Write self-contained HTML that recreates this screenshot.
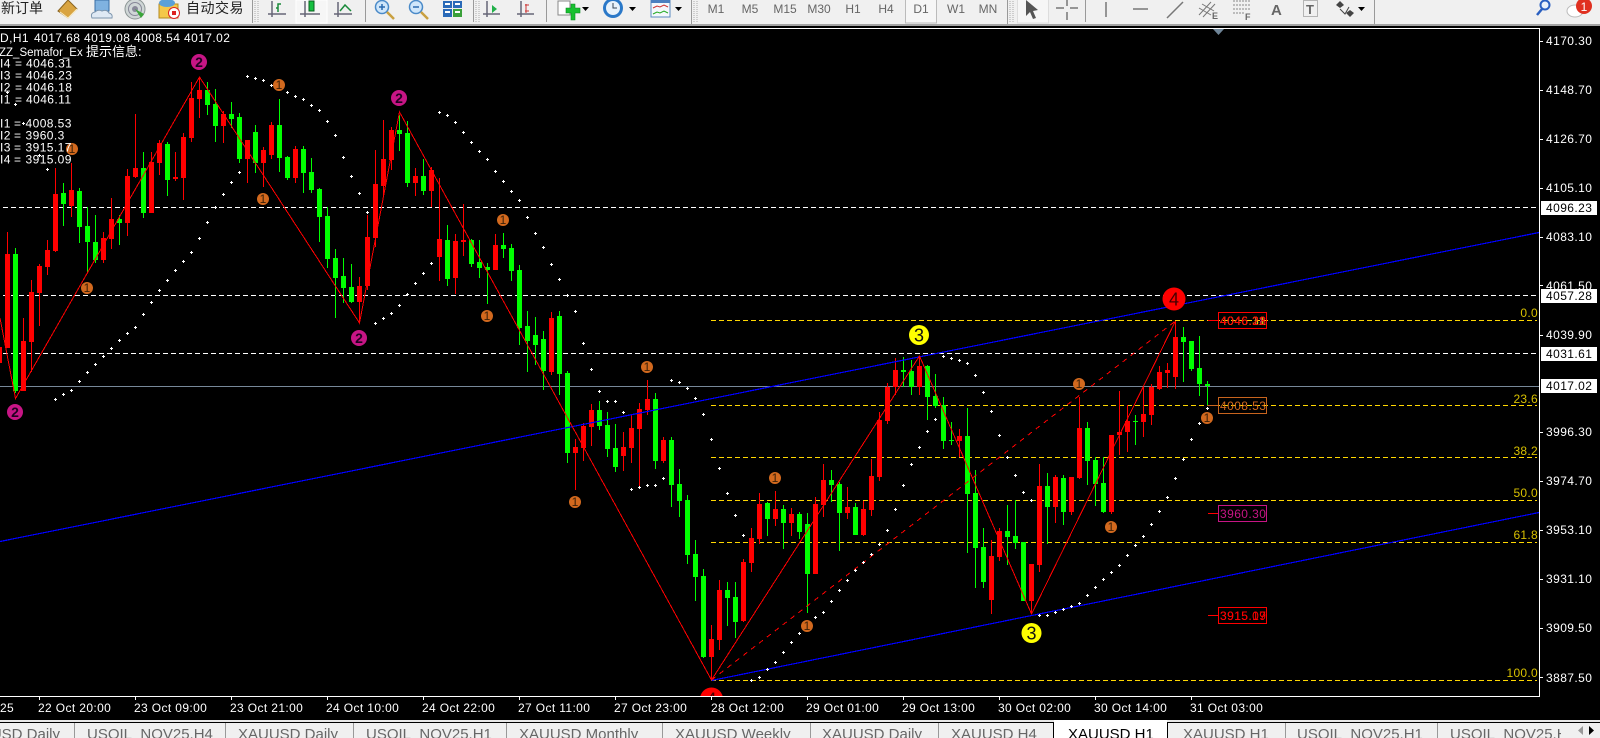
<!DOCTYPE html>
<html><head><meta charset="utf-8"><title>XAUUSD,H1</title>
<style>
html,body{margin:0;padding:0;background:#000;width:1600px;height:738px;overflow:hidden}
svg{display:block}
text{font-family:"Liberation Sans","Noto Sans CJK SC",sans-serif;white-space:pre}
.ax{font-size:12px;letter-spacing:.42px;fill:#fff}
.tm{font-size:12px;letter-spacing:.37px;fill:#fff}
.tf{font-size:12px;fill:#666;text-anchor:middle}
.tab{font-size:15px;fill:#666}
.inf{font-size:12px;fill:#fff;letter-spacing:.42px}
.fib{font-size:12px;fill:#d8c000;text-anchor:end;letter-spacing:.3px}
.lb{font-size:12px;letter-spacing:.42px}
.s1{font-size:12px;fill:#3a2008;text-anchor:middle}
.s2{font-size:14px;fill:#200020;text-anchor:middle;font-weight:bold}
.s3{font-size:18px;fill:#111;text-anchor:middle}
</style></head><body>
<svg width="1600" height="738" viewBox="0 0 1600 738" xmlns="http://www.w3.org/2000/svg">
<defs>
<clipPath id="c"><rect x="0" y="29" width="1539" height="667"/></clipPath>
<marker id="d" viewBox="0 0 3 3" refX="1" refY="1" markerWidth="3" markerHeight="3" markerUnits="userSpaceOnUse"><path d="M1 0h1v3H1zM0 1h3v1H0z" fill="#fff"/></marker>
</defs>
<rect width="1600" height="738" fill="#000"/>

<!-- toolbar -->
<rect width="1600" height="24" fill="#f0f0f0"/>
<rect y="24" width="1600" height="2" fill="#a4a4a4"/>
<text x="1" y="13" font-size="14" fill="#222">新订单</text>
<text x="186" y="13" font-size="14" fill="#222" letter-spacing=".5">自动交易</text>
<!-- book -->
<path d="M58 11 68 0l9 9-9 9z" fill="#d9a441" stroke="#8a6420"/><path d="M60 12l8 6 9-9" fill="none" stroke="#fff2c8"/>
<!-- monitor cloud -->
<path d="M95 0h14v11H95z" fill="#7fb2e0" stroke="#3a6ea5"/><path d="M92 18q-2-5 3-6 3-3 7-1 5-2 7 2 4 1 3 5z" fill="#dfe9f4" stroke="#7d95ad"/>
<!-- radar -->
<circle cx="135" cy="9" r="10" fill="#cfd6d6" stroke="#8b9494"/><circle cx="135" cy="9" r="6.5" fill="none" stroke="#889"/><circle cx="135" cy="9" r="3" fill="#889"/><path d="M135 9l6 9 3-4z" fill="#3aa53a"/>
<!-- auto -->
<path d="M159 4h19v14h-19z" fill="#f4c84a" stroke="#b58a20"/><ellipse cx="167" cy="3" rx="8" ry="4" fill="#5aa0d8"/><circle cx="174" cy="13" r="5.5" fill="#fff" stroke="#d22"/><rect x="172" y="11" width="4" height="4" fill="#d22"/>
<path d="M252.5 0V23M691.5 0V24M1007.5 0V24M365.5 0V22M473.5 0V22M546.5 0V22M1085.5 0V22M1374.5 0V24" stroke="#999"/>
<path d="M255 1v22M258 1v22M476 1v22M479 1v22M694 1v22M697 1v22M1010 1v22M1013 1v22" stroke="#aaa" stroke-dasharray="1 1"/>
<!-- pressed -->
<rect x="296" y="0" width="31" height="23" fill="#f6f6f6" stroke="#fff"/>
<rect x="905.5" y="-1" width="31" height="24" fill="#f6f6f6" stroke="#bbb"/>
<rect x="1017.5" y="-1" width="31" height="24" fill="#f6f6f6" stroke="#ddd"/>
<!-- chart type -->
<g fill="none" stroke="#667" stroke-width="1.5"><path d="M272 1v16M268 14h18M283 17v0"/><path d="M305 1v16M300 14h20"/><path d="M338 2v15M334 14h18"/></g>
<path d="M278 12V4h3M278 8h-2" fill="none" stroke="#1a8a3a" stroke-width="1.5"/>
<rect x="309" y="1" width="5" height="10" fill="#16c040" stroke="#0a6020"/>
<path d="M340 11l5-6 6 6" fill="none" stroke="#1a8a3a" stroke-width="1.5"/>
<!-- zoom -->
<circle cx="382" cy="7" r="6.5" fill="#cfe6fa" stroke="#4a8ac8" stroke-width="1.5"/><path d="M379 7h6M382 4v6" stroke="#2a6ab0" stroke-width="1.5"/><path d="M387 12l7 7" stroke="#c9a040" stroke-width="2.5"/>
<circle cx="416" cy="7" r="6.5" fill="#cfe6fa" stroke="#4a8ac8" stroke-width="1.5"/><path d="M413 7h6" stroke="#2a6ab0" stroke-width="1.5"/><path d="M421 12l7 7" stroke="#c9a040" stroke-width="2.5"/>
<g><rect x="443" y="1" width="9" height="7" fill="#2a6ab8"/><rect x="453" y="1" width="9" height="7" fill="#2a6ab8"/><rect x="443" y="9" width="9" height="8" fill="#2a6ab8"/><rect x="453" y="9" width="9" height="8" fill="#3aa03a"/><rect x="445" y="3" width="5" height="2" fill="#fff"/><rect x="455" y="3" width="5" height="2" fill="#fff"/><rect x="445" y="11" width="5" height="2" fill="#fff"/><rect x="455" y="11" width="5" height="2" fill="#fff"/></g>
<path d="M487 1v16M483 14h17M521 1v16M517 14h17" fill="none" stroke="#667" stroke-width="1.5"/>
<path d="M492 5l5 4-5 4z" fill="#22b04a"/><path d="M526 4v9M525 5h4M525 11h4" stroke="#c33" fill="none"/>
<!-- new chart -->
<path d="M558 1h12v14h-12z" fill="#fff" stroke="#888"/><path d="M566 8h5V4h4v4h5v5h-5v7h-4v-7h-5z" fill="#18c030" stroke="#0a8a20" stroke-width=".6"/>
<path d="M582 7h7l-3.500 4zM629 7h7l-3.500 4zM675 7h7l-3.500 4z" fill="#000"/>
<!-- clock -->
<circle cx="613" cy="8" r="10" fill="#2a78c8"/><circle cx="613" cy="8" r="7" fill="#e8f2fb"/><path d="M613 3v5h4" fill="none" stroke="#345"/>
<!-- indicators -->
<rect x="651" y="0" width="19" height="17" fill="#f4f8fc" stroke="#5a8ac0"/><rect x="651" y="0" width="19" height="3" fill="#4a80c0"/><path d="M653 8l4-2 3 1 4-2 4 2" fill="none" stroke="#c33"/><path d="M653 14l4-2 3 1 4-2 4 2" fill="none" stroke="#2a2"/>
<!-- timeframes -->
<text class="tf" x="716" y="13">M1</text><text class="tf" x="750" y="13">M5</text><text class="tf" x="785" y="13">M15</text><text class="tf" x="819" y="13">M30</text><text class="tf" x="853" y="13">H1</text><text class="tf" x="886" y="13">H4</text><text class="tf" x="921" y="13">D1</text><text class="tf" x="956" y="13">W1</text><text class="tf" x="988" y="13">MN</text>
<!-- tools -->
<path d="M1026 0l0 16 4-4 3 7 3-1-3-7 5-1z" fill="#555"/>
<path d="M1056 8h8M1070 8h8M1067 0v6M1067 12v8" stroke="#777" stroke-width="1.500"/>
<path d="M1106 2v15M1133 9h15M1167 18l16-16" stroke="#777" stroke-width="1.500" fill="none"/>
<path d="M1199 15l12-13M1203 17l12-13M1199 8l12 7M1202 4l12 7" stroke="#777" fill="none"/><text x="1212" y="19" font-size="9" font-weight="bold" fill="#666">E</text>
<path d="M1233 1h17M1233 5h17M1233 9h17M1233 13h12" stroke="#888" stroke-dasharray="2 1"/><text x="1245" y="20" font-size="9" font-weight="bold" fill="#666">F</text>
<text x="1271" y="15" font-size="15" font-weight="bold" fill="#666">A</text>
<rect x="1303.500" y="0.500" width="14" height="16" fill="none" stroke="#777" stroke-dasharray="1 1"/><text x="1306" y="14" font-size="13" font-weight="bold" fill="#666">T</text>
<path d="M1336 5l4-4 4 4-4 3zM1346 13l4-3 4 3-4 4z" fill="#444"/><path d="M1340 9l5 5 4-7" stroke="#444" fill="none"/>
<path d="M1358 7h7l-3.500 4z" fill="#000"/>
<circle cx="1545" cy="5" r="4.500" fill="#e8f0fa" stroke="#2a5fc0" stroke-width="2"/><path d="M1542 9l-5 6" stroke="#2a5fc0" stroke-width="2.500"/>
<ellipse cx="1575" cy="11" rx="8" ry="6" fill="#fff" stroke="#bbb"/>
<circle cx="1584" cy="6" r="8" fill="#e03020"/><text x="1584" y="11" font-size="12" fill="#fff" text-anchor="middle">1</text>
<path d="M1213 29h11l-5.500 6z" fill="#6f8598"/>

<!-- chart frame -->
<path d="M0 28.500H1539.500V696.500H0" fill="none" stroke="#fff"/>

<g clip-path="url(#c)" shape-rendering="crispEdges">
<!-- horizontals -->
<path d="M3 207.500H1539M3 295.500H1539M3 353.500H1539" stroke="#fff" stroke-dasharray="5 3" fill="none"/>
<path d="M0 386.500H1539" stroke="#778899"/>
<path d="M711 320.500H1537M711 405.500H1537M711 457.500H1537M711 500.500H1537M711 542.500H1537M711 680.500H1537" stroke="#ffd700" stroke-dasharray="5 3" fill="none"/>

<!-- wicks -->
<path stroke="#f00" fill="none" d="M-.5 318V368M7.500 232V348M23.500 318V391M31.500 280V372M39.500 264V326M47.500 240V275M55.500 168V252M71.500 163V217M103.500 232V263M111.500 198V249M127.500 169V236M135.500 114V178M151.500 152V213M159.500 140V175M175.500 152V181M183.500 133V200M191.500 82V142M199.500 78V118M223.500 111V143M247.500 140V183M263.500 147V187M271.500 122V159M295.500 146V183M359.500 277V322M367.500 215V290M375.500 150V247M383.500 120V195M391.500 127V170M415.500 168V196M431.500 167V207M439.500 178V281M455.500 234V294M463.500 204V256M495.500 234V270M551.500 312V375M575.500 439V490M583.500 423V461M591.500 404V446M623.500 432V471M631.500 415V463M639.500 403V487M647.500 380V415M663.500 437V463M711.500 625V680M719.500 580V650M743.500 559V622M751.500 528V572M759.500 493V544M775.500 491V526M791.500 508V536M815.500 497V574M823.500 464V517M847.500 487V519M863.500 501V536M871.500 459V516M879.500 412V481M887.500 383V424M895.500 358V395M919.500 357V395M959.500 429V457M991.500 540V614M999.500 528V561M1031.500 564V614M1039.500 464V572M1055.500 475V523M1071.500 477V515M1079.500 397V479M1111.500 435V514M1119.500 391V455M1127.500 405V452M1143.500 387V437M1151.500 384V425M1159.500 366V390M1167.500 363V388M1175.500 321V389"/>
<path stroke="#0f0" fill="none" d="M15.500 248V393M63.500 183V226M79.500 188V243M87.500 207V273M95.500 215V263M119.500 215V245M143.500 152V218M167.500 142V196M207.500 82V115M215.500 89V142M231.500 102V128M239.500 113V163M255.500 125V173M279.500 99V172M287.500 156V180M303.500 146V193M311.500 158V193M319.500 188V242M327.500 207V268M335.500 249V318M343.500 258V303M351.500 264V303M399.500 115V151M407.500 121V187M423.500 159V195M447.500 225V286M471.500 239V267M479.500 240V278M487.500 263V304M503.500 233V258M511.500 244V281M519.500 265V345M527.500 311V372M535.500 317V365M543.500 331V390M559.500 311V395M567.500 371V463M599.500 401V430M607.500 412V457M615.500 424V472M655.500 393V469M671.500 437V507M679.500 469V517M687.500 495V564M695.500 540V601M703.500 569V658M727.500 582V626M735.500 582V638M767.500 502V536M783.500 505V549M799.500 512V539M807.500 513V613M831.500 470V502M839.500 482V551M855.500 503V535M903.500 357V387M911.500 360V395M927.500 365V420M935.500 374V408M943.500 397V449M951.500 422V445M967.500 408V553M975.500 470V588M983.500 528V588M1007.500 505V565M1015.500 500V549M1023.500 542V601M1047.500 473V544M1063.500 475V525M1087.500 422V485M1095.500 457V506M1103.500 457V513M1135.500 415V445M1183.500 327V382M1191.500 341V371M1199.500 336V396M1207.500 381V406"/>
<!-- bodies -->
<path stroke="#f00" stroke-width="5" fill="none" d="M-.5 347V363M7.500 254V348M23.500 341V391M31.500 292V342M39.500 266V293M47.500 250V267M55.500 194V251M71.500 190V206M103.500 238V260M111.500 219V239M127.500 176V223M135.500 168V177M151.500 162V213M159.500 143V163M175.500 177V179M183.500 137V178M191.500 98V138M199.500 90V99M223.500 114V126M247.500 140V159M263.500 150V163M271.500 125V155M295.500 149V178M359.500 286V302M367.500 237V286M375.500 184V238M383.500 159V186M391.500 130V160M415.500 176V183M431.500 170V191M439.500 239V257M455.500 241V278M463.500 240V242M495.500 245V270M551.500 318V372M575.500 447V453M583.500 426V448M591.500 410V427M623.500 447V456M631.500 428V448M639.500 409V429M647.500 399V410M663.500 440V461M711.500 639V657M719.500 590V640M743.500 562V621M751.500 538V563M759.500 504V539M775.500 509V519M791.500 514V523M815.500 504V574M823.500 480V505M847.500 507V513M863.500 509V535M871.500 476V510M879.500 420V477M887.500 387V421M895.500 370V387M919.500 366V387M959.500 436V441M991.500 556V600M999.500 531V557M1031.500 564V601M1039.500 486V565M1055.500 477V507M1071.500 477V512M1079.500 428V478M1111.500 435V512M1119.500 432V435M1127.500 421V432M1143.500 414V422M1151.500 387V415M1159.500 372V389M1167.500 370V373M1175.500 337V377"/>
<path stroke="#0f0" stroke-width="5" fill="none" d="M15.500 254V391M63.500 193V204M79.500 191V227M87.500 226V242M95.500 242V260M119.500 219V223M143.500 168V213M167.500 144V180M207.500 90V105M215.500 104V126M231.500 114V119M239.500 117V159M255.500 132V163M279.500 125V158M287.500 157V178M303.500 149V173M311.500 172V190M319.500 189V217M327.500 216V259M335.500 258V278M343.500 276V288M351.500 287V302M399.500 130V134M407.500 133V183M423.500 176V191M447.500 240V279M471.500 240V264M479.500 262V268M487.500 267V270M503.500 245V249M511.500 248V271M519.500 270V328M527.500 326V341M535.500 335V345M543.500 339V371M559.500 316V374M567.500 373V453M599.500 410V426M607.500 425V449M615.500 448V467M655.500 399V461M671.500 440V485M679.500 484V501M687.500 500V555M695.500 554V577M703.500 576V657M727.500 590V598M735.500 597V622M767.500 503V519M783.500 509V523M799.500 514V532M807.500 524V574M831.500 480V485M839.500 484V513M855.500 507V535M903.500 370V372M911.500 371V387M927.500 366V397M935.500 396V406M943.500 405V441M951.500 440V441M967.500 436V494M975.500 493V548M983.500 547V582M1007.500 531V537M1015.500 536V543M1023.500 542V601M1047.500 486V507M1063.500 478V512M1087.500 428V461M1095.500 460V484M1103.500 483V512M1135.500 421V422M1183.500 337V342M1191.500 341V369M1199.500 368V384M1207.500 384V386"/>

<!-- trendlines -->
<path d="M0 541.500L1539 232.500M711.500 680.500L1539 512.500" stroke="#00f" fill="none" stroke-width="1.200"/>
<!-- zigzag -->
<path d="M0 318L15.500 398.500L199.500 77L359.500 323L399.500 112L711.500 680L919.500 356L1031.500 614L1175.500 321" stroke="#f00" fill="none"/>
<path d="M711.500 680L1175.500 321" stroke="#f00" fill="none" stroke-dasharray="5 5"/>
</g>

<!-- stubs & labels -->
<path d="M1208 320.500H1218M1208 513.500H1218M1208 615.500H1218" stroke="#f00"/>
<path d="M1207 405.500H1218" stroke="#c8641e"/>
<g fill="none"><rect x="1218.500" y="312.500" width="48" height="16" stroke="#f00"/><rect x="1218.500" y="397.500" width="48" height="16" stroke="#c8641e"/><rect x="1218.500" y="505.500" width="48" height="16" stroke="#c71585"/><rect x="1218.500" y="607.500" width="48" height="16" stroke="#f00"/></g>
<text class="lb" x="1220" y="325" fill="#c71585">4046.18</text><text class="lb" x="1220" y="325" fill="#ffd700">4046.31</text><text class="lb" x="1220" y="325" fill="#d2691e">4046.11</text><text class="lb" x="1220" y="325" fill="#f00">4046.23</text>
<text class="lb" x="1220" y="410" fill="#d2691e">4008.53</text>
<text class="lb" x="1220" y="518" fill="#c71585">3960.30</text>
<text class="lb" x="1220" y="620" fill="#f00">3915.09</text><text class="lb" x="1220" y="620" fill="#f00">3915.17</text>

<!-- fib labels -->
<text class="fib" x="1538" y="317">0.0</text><text class="fib" x="1538" y="403">23.6</text><text class="fib" x="1538" y="455">38.2</text><text class="fib" x="1538" y="497">50.0</text><text class="fib" x="1538" y="539">61.8</text><text class="fib" x="1538" y="677">100.0</text>

<!-- dots -->
<polyline fill="none" stroke="none" marker-start="url(#d)" marker-mid="url(#d)" marker-end="url(#d)" points="55,399 63,394 71,390 79,381 87,372 95,364 103,356 111,348 119,340 127,333 135,327 143,314 151,302 159,290 167,280 175,270 183,261 191,252 199,238 207,222 215,207 223,194 231,182 239,172 247,76 255,78 263,80 271,85 287,92 295,96 303,99 311,105 319,110 327,121 335,135 343,157 351,176 359,193 367,212 7,92 15,104 23,123 39,155 47,169 375,323 383,318 391,313 399,305 407,294 415,283 423,273 431,263 439,112 447,115 455,122 463,132 471,142 479,151 487,159 495,171 503,181 511,191 519,200 527,217 535,233 543,247 551,264 559,279 567,295 575,311 583,343 591,369 599,391 607,401 615,401 623,412 631,489 639,487 647,485 655,485 663,478 671,380 679,382 687,388 695,398 703,414 711,439 719,468 727,493 735,515 743,535 751,680 759,677 767,669 775,662 783,652 791,642 799,633 807,625 815,617 823,612 831,601 839,590 847,580 855,570 863,562 871,554 879,544 887,530 895,509 903,485 911,464 919,447 927,431 935,419 943,356 951,358 959,360 967,363 975,375 983,392 991,411 999,435 1007,457 1015,475 1023,492 1031,500 1039,615 1047,615 1055,612 1063,609 1071,606 1079,603 1087,595 1095,587 1103,579 1111,572 1119,565 1127,555 1135,545 1143,536 1151,524 1159,511 1167,497 1175,478 1183,459 1191,439 1199,423 1207,408"/>

<!-- semafor -->
<g fill="#c71585"><circle cx="199" cy="62" r="8"/><circle cx="399" cy="98" r="8"/><circle cx="15" cy="412" r="8"/><circle cx="359" cy="338" r="8"/></g>
<text class="s2" x="199" y="67">2</text><text class="s2" x="399" y="103">2</text><text class="s2" x="15" y="417">2</text><text class="s2" x="359" y="343">2</text>
<g fill="#d2691e"><circle cx="279" cy="85" r="6"/><circle cx="72" cy="149" r="6"/><circle cx="263" cy="199" r="6"/><circle cx="87" cy="288" r="6"/><circle cx="503" cy="220" r="6"/><circle cx="487" cy="316" r="6"/><circle cx="647" cy="367" r="6"/><circle cx="575" cy="502" r="6"/><circle cx="775" cy="478" r="6"/><circle cx="807" cy="626" r="6"/><circle cx="1079" cy="384" r="6"/><circle cx="1111" cy="527" r="6"/><circle cx="1207" cy="418" r="6"/></g>
<text class="s1" x="279" y="89">1</text><text class="s1" x="72" y="153">1</text><text class="s1" x="263" y="203">1</text><text class="s1" x="87" y="292">1</text><text class="s1" x="503" y="224">1</text><text class="s1" x="487" y="320">1</text><text class="s1" x="647" y="371">1</text><text class="s1" x="575" y="506">1</text><text class="s1" x="775" y="482">1</text><text class="s1" x="807" y="630">1</text><text class="s1" x="1079" y="388">1</text><text class="s1" x="1111" y="531">1</text><text class="s1" x="1207" y="422">1</text>
<g fill="#ff0"><circle cx="919" cy="335" r="10"/><circle cx="1031.500" cy="633" r="10"/></g>
<text class="s3" x="919" y="341.500">3</text><text class="s3" x="1031.500" y="639.500">3</text>
<circle cx="1174" cy="299" r="11.500" fill="#f00"/><text class="s3" x="1174" y="305.500" style="fill:#400">4</text>
<g clip-path="url(#c)"><circle cx="711.500" cy="699" r="11.500" fill="#f00"/><text class="s3" x="711.500" y="705.500" style="fill:#400">4</text></g>

<!-- info text -->
<text class="inf" x="0" y="42">D,H1</text><text class="inf" x="34" y="42">4017.68</text><text class="inf" x="84" y="42">4019.08</text><text class="inf" x="134" y="42">4008.54</text><text class="inf" x="184" y="42">4017.02</text>
<text x="-1" y="56" font-size="11.500" fill="#fff">ZZ_Semafor_Ex</text><text x="86" y="56" font-size="13" fill="#fff">提示信息:</text>
<g class="inf">
<text class="inf" x="0" y="67.500">I4</text><text class="inf" x="15" y="67.500">=</text><text class="inf" x="26" y="67.500">4046.31</text>
<text class="inf" x="0" y="79.500">I3</text><text class="inf" x="15" y="79.500">=</text><text class="inf" x="26" y="79.500">4046.23</text>
<text class="inf" x="0" y="91.500">I2</text><text class="inf" x="15" y="91.500">=</text><text class="inf" x="26" y="91.500">4046.18</text>
<text class="inf" x="0" y="103.500">I1</text><text class="inf" x="15" y="103.500">=</text><text class="inf" x="26" y="103.500">4046.11</text>
<text class="inf" x="0" y="127.500">I1</text><text class="inf" x="14" y="127.500">=</text><text class="inf" x="25.500" y="127.500">4008.53</text>
<text class="inf" x="0" y="139.500">I2</text><text class="inf" x="14" y="139.500">=</text><text class="inf" x="25.500" y="139.500">3960.3</text>
<text class="inf" x="0" y="151.500">I3</text><text class="inf" x="14" y="151.500">=</text><text class="inf" x="25.500" y="151.500">3915.17</text>
<text class="inf" x="0" y="163.500">I4</text><text class="inf" x="14" y="163.500">=</text><text class="inf" x="25.500" y="163.500">3915.09</text>
</g>

<!-- price axis -->
<path d="M1540 41.500h3M1540 90.500h3M1540 139.500h3M1540 188.500h3M1540 237.500h3M1540 285.500h3M1540 335.500h3M1540 432.500h3M1540 481.500h3M1540 530.500h3M1540 579.500h3M1540 628.500h3M1540 677.500h3" stroke="#fff"/>
<text class="ax" x="1546" y="45">4170.30</text><text class="ax" x="1546" y="94">4148.70</text><text class="ax" x="1546" y="143">4126.70</text><text class="ax" x="1546" y="192">4105.10</text><text class="ax" x="1546" y="241">4083.10</text><text class="ax" x="1546" y="290">4061.50</text><text class="ax" x="1546" y="339">4039.90</text><text class="ax" x="1546" y="436">3996.30</text><text class="ax" x="1546" y="485">3974.70</text><text class="ax" x="1546" y="534">3953.10</text><text class="ax" x="1546" y="583">3931.10</text><text class="ax" x="1546" y="632">3909.50</text><text class="ax" x="1546" y="682">3887.50</text>
<g fill="#fff"><rect x="1541" y="201" width="56" height="14"/><rect x="1541" y="289" width="56" height="14"/><rect x="1541" y="347" width="56" height="14"/><rect x="1541" y="379" width="56" height="14"/></g>
<g><text class="ax" style="fill:#000" x="1546" y="212">4096.23</text><text class="ax" style="fill:#000" x="1546" y="300">4057.28</text><text class="ax" style="fill:#000" x="1546" y="358">4031.61</text><text class="ax" style="fill:#000" x="1546" y="390">4017.02</text></g>

<!-- time axis -->
<path d="M39.500 697v3M135.500 697v3M231.500 697v3M327.500 697v3M423.500 697v3M519.500 697v3M615.500 697v3M711.500 697v3M807.500 697v3M903.500 697v3M999.500 697v3M1095.500 697v3M1191.500 697v3" stroke="#fff"/>
<text class="tm" x="0" y="712">25</text><text class="tm" x="38" y="712">22 Oct 20:00</text><text class="tm" x="134" y="712">23 Oct 09:00</text><text class="tm" x="230" y="712">23 Oct 21:00</text><text class="tm" x="326" y="712">24 Oct 10:00</text><text class="tm" x="422" y="712">24 Oct 22:00</text><text class="tm" x="518" y="712">27 Oct 11:00</text><text class="tm" x="614" y="712">27 Oct 23:00</text><text class="tm" x="711" y="712">28 Oct 12:00</text><text class="tm" x="806" y="712">29 Oct 01:00</text><text class="tm" x="902" y="712">29 Oct 13:00</text><text class="tm" x="998" y="712">30 Oct 02:00</text><text class="tm" x="1094" y="712">30 Oct 14:00</text><text class="tm" x="1190" y="712">31 Oct 03:00</text>

<!-- tabs -->
<rect y="720" width="1600" height="2" fill="#e8e8e8"/>
<rect y="722" width="1600" height="16" fill="#f0f0f0"/>
<path d="M74.500 723V738M225.500 723V738M353.500 723V738M506.500 723V738M662.500 723V738M810.500 723V738M938.500 723V738M1285.500 723V738M1437.500 723V738" stroke="#999"/>
<path d="M0 722.500H1053.500V738M1167.500 738V722.500H1600" stroke="#000" fill="none"/>
<rect x="1054" y="720" width="113" height="18" fill="#fff"/>
<text class="tab" x="-40" y="739">XAUUSD Daily</text><text class="tab" x="87" y="739">USOIL_NOV25,H4</text><text class="tab" x="238" y="739">XAUUSD Daily</text><text class="tab" x="366" y="739">USOIL_NOV25,H1</text><text class="tab" x="519" y="739">XAUUSD Monthly</text><text class="tab" x="675" y="739">XAUUSD Weekly</text><text class="tab" x="822" y="739">XAUUSD Daily</text><text class="tab" x="951" y="739">XAUUSD H4</text><text class="tab" x="1068" y="739" style="fill:#000">XAUUSD H1</text><text class="tab" x="1183" y="739">XAUUSD H1</text><text class="tab" x="1297" y="739">USOIL_NOV25,H1</text><text class="tab" x="1450" y="739">USOIL_NOV25,H</text>
<rect x="1561" y="723" width="39" height="15" fill="#f0f0f0"/>
<path d="M1583 726v9l-5-4.500z" fill="#999"/><path d="M1589 726v9l5-4.500z" fill="#000"/>
</svg>
</body></html>
